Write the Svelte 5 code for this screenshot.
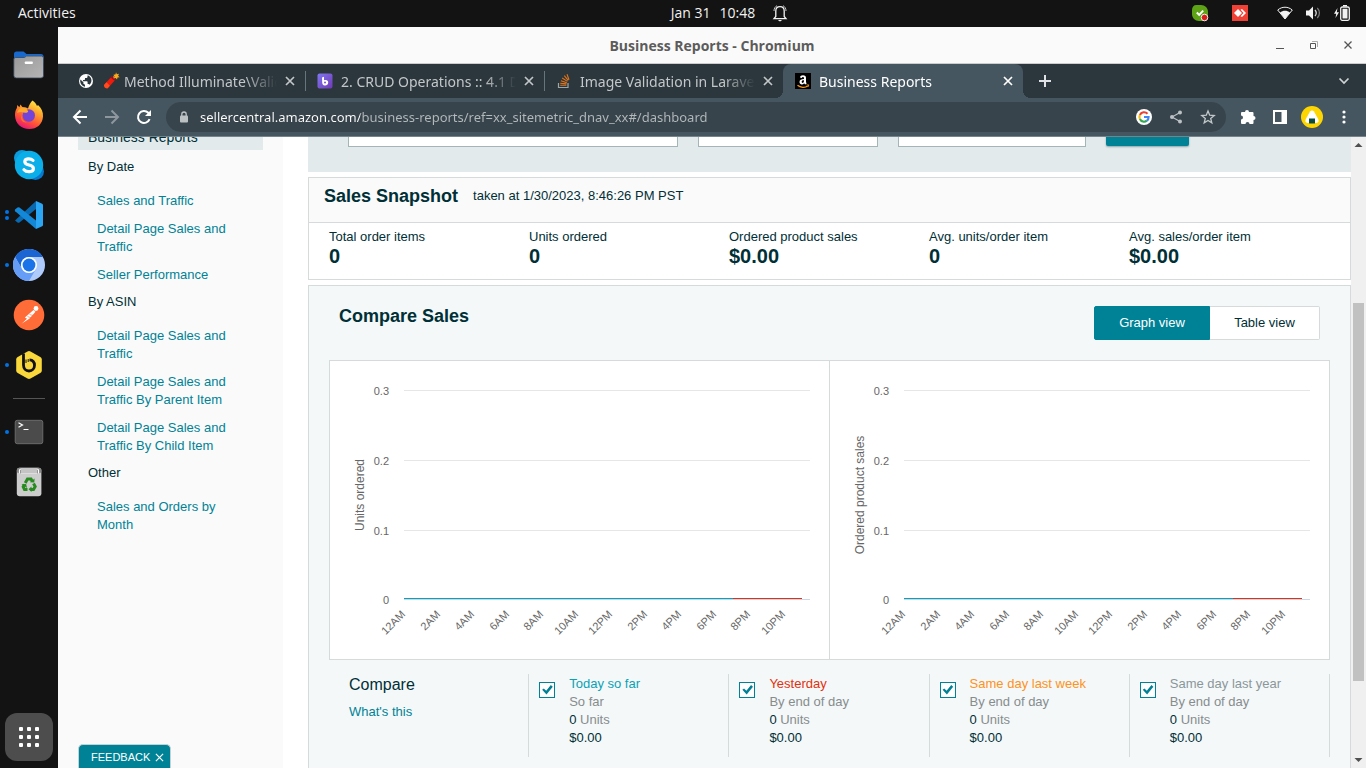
<script>
  const tabs = [
    { title: 'Method Illuminate\\Validation', icon: 'globe', active: false },
    { title: '2. CRUD Operations :: 4.1 Database', icon: 'bagisto', active: false },
    { title: 'Image Validation in Laravel', icon: 'stack', active: false },
    { title: 'Business Reports', icon: 'amazon', active: true }
  ];

  const sections = [
    { title: 'By Date', links: ['Sales and Traffic', 'Detail Page Sales and Traffic', 'Seller Performance'] },
    {
      title: 'By ASIN',
      links: [
        'Detail Page Sales and Traffic',
        'Detail Page Sales and Traffic By Parent Item',
        'Detail Page Sales and Traffic By Child Item'
      ]
    },
    { title: 'Other', links: ['Sales and Orders by Month'] }
  ];

  const metrics = [
    { label: 'Total order items', value: '0' },
    { label: 'Units ordered', value: '0' },
    { label: 'Ordered product sales', value: '$0.00' },
    { label: 'Avg. units/order item', value: '0' },
    { label: 'Avg. sales/order item', value: '$0.00' }
  ];

  const charts = ['Units ordered', 'Ordered product sales'];
  const hours = ['12AM', '2AM', '4AM', '6AM', '8AM', '10AM', '12PM', '2PM', '4PM', '6PM', '8PM', '10PM'];
  const levels = [
    { label: '0.3', y: 30 },
    { label: '0.2', y: 100 },
    { label: '0.1', y: 170 },
    { label: '0', y: 239 }
  ];

  const series = [
    { id: 'today', name: 'Today so far', note: 'So far', color: '#0aa2b5' },
    { id: 'yesterday', name: 'Yesterday', note: 'By end of day', color: '#e3310e' },
    { id: 'week', name: 'Same day last week', note: 'By end of day', color: '#ff9220' },
    { id: 'year', name: 'Same day last year', note: 'By end of day', color: '#8a9799' }
  ];

  let view = $state('graph');
</script>

{#snippet cross(size, weight)}
  <svg width={size} height={size} viewBox="0 0 10 10" aria-hidden="true">
    <path d="M1 1l8 8M9 1l-8 8" stroke="currentColor" stroke-width={weight} fill="none" />
  </svg>
{/snippet}

{#snippet favicon(kind)}
  {#if kind === 'globe'}
    <svg width="16" height="16" viewBox="0 0 16 16" aria-hidden="true">
      <circle cx="8" cy="8" r="7" fill="#fff" />
      <path d="M2.4 6.6l3 2.6v1.6l1.6 1v1.9C4.400 13.300 2.200 11 2.200 8zM9.500 2.600v1.200c0 .8-.6 1.300-1.300 1.300H7v1.200c0 .4-.3.700-.7.700H5v1.300h3.900c.4 0 .7.300.7.700v1.900h.7c.6 0 1.100.4 1.300.9 1.800-2 2.300-4 1.500-6.200-.5-1.400-1.600-2.500-2.900-3z" fill="#2c373d" />
    </svg>
    <svg width="18" height="18" viewBox="0 0 18 18" aria-hidden="true">
      <path d="M2.200 12.800L9.800 4.500l3.600 3.200-7.700 8.500z" fill="#ee1c0c" />
      <path d="M2.200 12.800l2.300-2.500 3.400 3.400-2.200 2.500c-1.500 1.200-4.600-1.500-3.500-3.400z" fill="#ff4b1f" />
      <path d="M9.800 4.500c1.500-.6 4 1.400 3.600 3.200l-1 1L8.700 5.600z" fill="#a80b12" />
      <path d="M11.500 5.500c.2-1.500 1-2.300 2-2.500" stroke="#d5a15a" fill="none" />
      <path d="M14 .3l.9 1.900 2.100-.5-.9 2 1.600 1.500-2.200.3-.5 2.100-1.300-1.700-2.200.5 1.100-1.900-1.200-1.700 2.100-.2z" fill="#fbab1c" />
    </svg>
  {:else if kind === 'bagisto'}
    <svg width="16" height="16" viewBox="0 0 16 16" aria-hidden="true">
      <defs>
        <linearGradient id="violet" x1="0" y1="0" x2="1" y2="1">
          <stop offset="0" stop-color="#8177f2" /><stop offset="1" stop-color="#7039b4" />
        </linearGradient>
      </defs>
      <rect x=".5" y=".5" width="15" height="15" rx="2" fill="url(#violet)" />
      <path d="M5 4.500l2-.8v3.600c2.400-1 4.300.2 4.200 2.300 0 2-1.600 3.200-3.500 3-1.700-.2-2.500-1.400-2.500-3z" fill="#fff" />
      <circle cx="8" cy="9.500" r="1" fill="#7950cf" />
    </svg>
  {:else if kind === 'stack'}
    <svg width="16" height="16" viewBox="0 0 16 16" aria-hidden="true">
      <path d="M2.500 10v4.500h9.500V10" stroke="#a0a6a8" stroke-width="1.200" fill="none" />
      <path d="M4.200 12.300h6.200M4.200 10.200l6.200.7M4.900 7.700l5.900 2M6.200 5l5.200 3.400M8.300 2.700l3.900 4.700M11 1.200l2 5.500" stroke="#e2731a" stroke-width="1.100" fill="none" />
    </svg>
  {:else}
    <svg width="16" height="16" viewBox="0 0 16 16" aria-hidden="true">
      <rect width="16" height="16" />
      <path d="M5 4.600C5.100 2.900 6.400 2.200 8 2.200c2 0 3 .8 3 2.700v3.500c0 1 .4 1.400.8 1.900L10.400 11.500c-.6-.4-1-.9-1.200-1.300-1.500 1.900-4.700 1.600-4.700-1.200 0-2.300 1.900-2.900 4.500-3 0-1.200 0-2-.9-2-.8 0-1 .4-1.200 1z M9 7.200c-1.500 0-2.300.4-2.300 1.600 0 1.400 1.600 1.400 2 .2.300-.5.300-1.200.3-1.800z" fill="#fff" fill-rule="evenodd" />
      <path d="M2.500 12.300c3 2.500 7.500 2.600 10.300.7" stroke="#f79a1c" stroke-width="1.300" fill="none" />
      <path d="M11.500 12l2.300-.1-.7 2" stroke="#f79a1c" stroke-width=".9" fill="none" />
    </svg>
  {/if}
{/snippet}

<div class="desktop">
  <header class="topbar">
    <button class="plain">Activities</button>
    <div class="clock">
      <span>Jan 31</span><span>10:48</span>
      <svg width="16" height="18" viewBox="0 0 16 18" aria-hidden="true">
        <path d="M3.800 12.500V7c0-2.600 1.600-4.300 4.200-4.300s4.200 1.700 4.200 4.300v5.500l1.800 2.200H2z" fill="none" stroke="#f2f2f2" stroke-width="1.300" />
        <path d="M6.200 16h3.600c-.5 1.800-3.100 1.800-3.600 0z" fill="#f2f2f2" />
        <path d="M2 7c0-2.500 1-4.300 3-5.300M14 7c0-2.500-1-4.300-3-5.300" stroke="#c5c5c5" fill="none" />
      </svg>
    </div>
    <div class="tray">
      <svg width="18" height="18" viewBox="0 0 18 18" aria-hidden="true">
        <path d="M1 6c0-3 1.500-5 4.500-5H10c4 0 7 3 7 7v4c0 3-2 5-5 5H8c-4 0-7-3-7-7z" fill="#5da315" />
        <path d="M5.800 8.500l2.400 2.400 4-4.300" stroke="#fff" stroke-width="2" fill="none" />
        <circle cx="13.500" cy="13.500" r="3.300" fill="#dd1b1b" stroke="#eee" stroke-width="1" />
      </svg>
      <svg class="remote" width="16" height="16" viewBox="0 0 16 16" aria-hidden="true">
        <rect width="16" height="16" fill="#ef4136" />
        <path d="M2 8l4-4 4 4-4 4z" fill="#fff" />
        <path d="M8.500 4.800L10 4l4 4-4 4-1.500-.8L11.500 8z" fill="#fff" />
      </svg>
      <svg width="16" height="16" viewBox="0 0 16 16" aria-hidden="true">
        <path d="M.7 5C5 1.300 11 1.300 15.300 5L8 14z" fill="none" stroke="#f2f2f2" />
        <path d="M3 7.500c3-2.300 7-2.300 10 0L8 14z" fill="#f2f2f2" />
      </svg>
      <svg width="16" height="16" viewBox="0 0 16 16" aria-hidden="true">
        <path d="M1 5.500h3L8 1.500v13L4 10.500H1z" fill="#f2f2f2" />
        <path d="M10 5c1.500 1.800 1.500 4.200 0 6" stroke="#d8d8d8" fill="none" stroke-width="1.300" />
        <path d="M12.300 3c2.800 2.800 2.800 7.200 0 10" stroke="#777" fill="none" stroke-width="1.300" />
      </svg>
      <svg width="18" height="18" viewBox="0 0 18 18" aria-hidden="true">
        <path d="M4.500 4L1 9.800h2.200L2.500 14 6 8.200H3.800z" fill="#f2f2f2" />
        <rect x="7.700" y="3" width="8.600" height="13.300" rx="1.500" fill="none" stroke="#f2f2f2" stroke-width="1.300" />
        <path d="M9.500 4.800h5v9.700h-5zM10 1h4v1.500h-4z" fill="#f2f2f2" />
      </svg>
    </div>
  </header>

  <nav class="dock" aria-label="Applications">
    <button aria-label="Files">
      <svg width="32" height="32" viewBox="0 0 32 32" aria-hidden="true">
        <defs><linearGradient id="steel" x1="0" y1="0" x2="1" y2="1"><stop offset="0" stop-color="#999" /><stop offset="1" stop-color="#b5b5b5" /></linearGradient></defs>
        <path d="M1 5q0-2.500 2.500-2.500h7l3 2.500H28q2.500 0 2.500 2.500V14H1z" fill="#1769cf" />
        <path d="M1 10h29.500V8Q30 6.500 28 6.500H13l-2 1.800H3Q1 8.500 1 10z" fill="#3589e6" />
        <path d="M.8 10q0-1.500 2-1.500h8.700l2-1.500h15q2 0 2 2v17.500q0 2.500-2.500 2.500H3.300Q.8 29 .8 26.500z" fill="url(#steel)" stroke="#32455c" stroke-width=".8" />
        <rect x="11.800" y="12.500" width="8" height="2.500" rx=".8" fill="#fff" />
      </svg>
    </button>
    <button aria-label="Firefox">
      <svg width="32" height="32" viewBox="0 0 32 32" aria-hidden="true">
        <defs><linearGradient id="flame" x1=".8" y1="0" x2=".3" y2="1"><stop offset="0" stop-color="#fff14c" /><stop offset=".35" stop-color="#ffa52a" /><stop offset=".7" stop-color="#ff5038" /><stop offset="1" stop-color="#e8137b" /></linearGradient></defs>
        <path d="M19.500 1.500c2.200 1.500 3.800 3.200 4.500 5.600l1-1.200c3.500 3 5.300 7.100 5 11.500C29.500 25 24 30 16.300 30 8 30 2.200 24.300 2 16.500c-.1-3 .6-5.600 2-7.800L4.200 6l2.200 2.300L7.500 5.500l2 2.800c2.200-.3 4 .2 5.500 1.200 1-3.500 2.500-6 4.500-8z" fill="url(#flame)" />
        <circle cx="15.800" cy="16.500" r="6.200" fill="#7444d8" />
        <path d="M4 14c3-1.500 5.500-.8 8-.3 1.500.3 2.700-.2 3.200-1.200-1-2.500-3.300-4-6-4.200-2.500 1-4.400 3-5.200 5.700z" fill="#ffa92c" />
        <path d="M9 16c-.5 3.500 1.500 6.500 5 7.500-4.500.4-7.500-3.500-5-7.500z" fill="#ff752c" />
      </svg>
    </button>
    <button aria-label="Skype">
      <svg width="32" height="32" viewBox="0 0 32 32" aria-hidden="true">
        <circle cx="9" cy="9" r="8" fill="#0d9bdc" /><circle cx="22.500" cy="22.500" r="8.500" fill="#0878cd" />
        <circle cx="16" cy="16" r="14.200" fill="#0aaee8" />
        <path d="M20 11.400c-2.600-2.300-8.200-2-8.200 1.300 0 4.400 8.600 2.200 8.600 6.700 0 4-6.800 4.300-9.400 1.300" fill="none" stroke="#fff" stroke-width="3.200" stroke-linecap="round" />
      </svg>
    </button>
    <button aria-label="Visual Studio Code">
      <i class="dots two"></i>
      <svg width="32" height="32" viewBox="0 0 32 32" aria-hidden="true">
        <path d="M2 21.500l2.500 2q1 .7 2 0L23 10V2z" fill="#0868b0" />
        <path d="M2 10.500l2.500-2q1-.7 2 0L23 21.500V30L2.200 12.200q-.8-.8-.2-1.700z" fill="#1488d8" />
        <path d="M23 2l6.200 2.800q.8.500.8 1.500v19.400q0 1-.8 1.500L23 30z" fill="#2aa6f5" />
      </svg>
    </button>
    <button aria-label="Chromium">
      <i class="dots"></i>
      <svg width="32" height="32" viewBox="0 0 32 32" aria-hidden="true">
        <circle cx="16" cy="16" r="16" fill="#afcbfb" />
        <path d="M2.100 8A16 16 0 0 1 29.900 8H16a8 8 0 0 0-7 12z" fill="#1b66d2" />
        <path d="M2.100 8A16 16 0 0 0 16 32l6.900-12A8 8 0 0 1 9 20z" fill="#669df6" />
        <circle cx="16" cy="16" r="8" fill="#fff" /><circle cx="16" cy="16" r="6.400" fill="#1a73e8" />
      </svg>
    </button>
    <button aria-label="Postman">
      <svg width="32" height="32" viewBox="0 0 32 32" aria-hidden="true">
        <circle cx="16" cy="16" r="15.300" fill="#ff6c37" />
        <circle cx="23" cy="9.500" r="2.400" fill="#fff" />
        <path d="M20.500 11l2 1.800-6.200 7-7.800 5 5.200-5-1.800-1.200z" fill="#fff" />
        <path d="M14.500 17.500l4 1.500M16.500 15.500l3.500 1M8.500 24.800l5-5.300" stroke="#ff6c37" stroke-width=".6" />
      </svg>
    </button>
    <button aria-label="Beekeeper Studio">
      <i class="dots"></i>
      <svg width="32" height="32" viewBox="0 0 32 32" aria-hidden="true">
        <path d="M14.500 2.400q1.500-.8 3 0l9.800 5.500q1.500.9 1.500 2.600v11q0 1.700-1.500 2.600l-9.800 5.500q-1.500.8-3 0l-9.800-5.500q-1.500-.9-1.500-2.600v-11q0-1.700 1.500-2.600z" fill="#fad83b" />
        <path d="M10.500 4.500V16c0 3.600 2.300 6 5.500 6s5.500-2.500 5.500-5.700-2-5.300-5-5.500" fill="none" stroke="#111" stroke-width="2.800" />
        <path d="M13 14v-3.500M15.200 13v-3" stroke="#111" stroke-width="1" />
      </svg>
    </button>
    <hr />
    <button aria-label="Terminal">
      <i class="dots"></i>
      <svg width="32" height="32" viewBox="0 0 32 32" aria-hidden="true">
        <rect x="2.200" y="4.300" width="27.600" height="23.400" rx="2" fill="#4b4b4b" stroke="#777" stroke-width=".8" />
        <path d="M5.500 6.800l4 2.200-4 2.200M10.500 13.500h5" stroke="#fff" stroke-width="1.200" fill="none" />
      </svg>
    </button>
    <button aria-label="Trash">
      <svg width="32" height="32" viewBox="0 0 32 32" aria-hidden="true">
        <rect x="3.800" y="1.800" width="24.600" height="28.500" rx="3" fill="#cdcdcd" />
        <rect x="3.800" y="1.800" width="24.600" height="5.500" rx="2.500" fill="#888" />
        <path d="M6.500 7.500V4.500Q6.500 3 8 3h16q1.500 0 1.500 1.500v3M8 5h16M8 7h16" stroke="#fff" stroke-width="1.200" fill="none" />
        <g fill="none" stroke="#278b1f" stroke-width="3">
          <path d="M12.200 17l2.300-4h3.500l1.300 2.500" /><path d="M20.500 17.500l1.700 3-1.700 3h-3" /><path d="M14.500 23.500h-3l-1.300-2.700 1.200-2.300" />
        </g>
        <path d="M17 16.200l4.300.3.300-4zM18.500 20.500v5.500l-3-2.700zM8.500 18.300l4.600-.4 1 4z" fill="#278b1f" />
      </svg>
    </button>
    <button class="grid-button" aria-label="Show applications">
      <svg width="20" height="20" viewBox="0 0 20 20" aria-hidden="true">
        {#each [0, 8, 16] as y}{#each [0, 8, 16] as x}<rect {x} {y} width="4" height="4" rx="1" fill="#fff" />{/each}{/each}
      </svg>
    </button>
  </nav>

  <main class="window">
    <div class="titlebar">
      <span class="window-title">Business Reports - Chromium</span>
      <div class="window-buttons">
        <button aria-label="Minimize"><svg width="10" height="12" viewBox="0 0 10 12"><path d="M1 9.500h8" stroke="#555" /></svg></button>
        <button aria-label="Restore"><svg width="10" height="10" viewBox="0 0 10 10"><path d="M1.500 3.500h5v5h-5z" stroke="#555" fill="none" /><path d="M3 1.500h5.500V7" stroke="#aaa" fill="none" /></svg></button>
        <button aria-label="Close window"><svg width="10" height="10" viewBox="0 0 10 10"><path d="M1.500 1.500l7 7M8.500 1.500l-7 7" stroke="#555" stroke-width="1.300" /></svg></button>
      </div>
    </div>

    <div class="tabstrip">
      {#each tabs as tab}
        <div class="tab" class:active={tab.active}>
          <button class="tab-label">
            {@render favicon(tab.icon)}
            <span>{tab.title}</span>
          </button>
          <button class="tab-close" aria-label="Close tab">{@render cross(10, 1.7)}</button>
        </div>
      {/each}
      <button class="new-tab" aria-label="New tab"><svg width="14" height="14" viewBox="0 0 14 14"><path d="M7 1v12M1 7h12" stroke="#dfe2e4" stroke-width="2" /></svg></button>
      <button class="tab-search" aria-label="Search tabs"><svg width="12" height="8" viewBox="0 0 12 8"><path d="M1.500 1.500L6 6l4.500-4.500" stroke="#cfd3d5" stroke-width="1.700" fill="none" /></svg></button>
    </div>

    <div class="toolbar">
      <button aria-label="Back"><svg width="16" height="16" viewBox="0 0 16 16"><path d="M15 8H2.500M8.500 1.500L2 8l6.500 6.500" stroke="#fff" stroke-width="2" fill="none" /></svg></button>
      <button aria-label="Forward"><svg width="16" height="16" viewBox="0 0 16 16"><path d="M1 8h12.500M7.500 1.500L14 8l-6.500 6.500" stroke="#8d979d" stroke-width="2" fill="none" /></svg></button>
      <button aria-label="Reload"><svg width="16" height="16" viewBox="0 0 16 16"><path d="M13.600 10.200A6 6 0 1 1 12.300 3.800L14 5.500" stroke="#fff" stroke-width="2" fill="none" /><path d="M15 1v6H9z" fill="#fff" /></svg></button>
      <div class="omnibox">
        <svg width="10" height="12" viewBox="0 0 10 12" aria-hidden="true"><rect x="1" y="4.500" width="8" height="7" rx="1" fill="#bcc1c4" /><path d="M2.800 5V3.200a2.200 2.200 0 0 1 4.400 0V5" stroke="#bcc1c4" stroke-width="1.300" fill="none" /></svg>
        <input type="text" aria-label="Address" spellcheck="false" value="sellercentral.amazon.com/business-reports/ref=xx_sitemetric_dnav_xx#/dashboard" />
        <button aria-label="Search with Google">
          <svg width="16" height="16" viewBox="0 0 16 16"><circle cx="8" cy="8" r="8" fill="#fff" />
            <g fill="none" stroke-width="2.100"><path d="M11.500 4.700A4.600 4.600 0 0 0 3.900 6" stroke="#ea4335" /><path d="M3.900 6a4.600 4.600 0 0 0 0 4" stroke="#fbbc05" /><path d="M3.900 10a4.600 4.600 0 0 0 7 1.700" stroke="#34a853" /><path d="M10.900 11.700A4.600 4.600 0 0 0 12.600 8H8" stroke="#4285f4" /></g></svg>
        </button>
        <button aria-label="Share"><svg width="16" height="16" viewBox="-1 -1 16 16"><path d="M11 2.500L3 7l8 4.500" stroke="#bcc1c4" stroke-width="1.200" fill="none" /><g fill="#bcc1c4"><circle cx="11" cy="2.500" r="2" /><circle cx="3" cy="7" r="2" /><circle cx="11" cy="11.500" r="2" /></g></svg></button>
        <button aria-label="Bookmark"><svg width="16" height="16" viewBox="0 0 16 16"><path d="M8 2l1.700 4.200 4.500.3-3.500 2.900 1.100 4.400L8 11.400l-3.800 2.400 1.100-4.400L1.800 6.500l4.500-.3z" stroke="#c3c8ca" stroke-width="1.300" fill="none" /></svg></button>
      </div>
      <button class="ext" aria-label="Extensions"><svg width="16" height="16" viewBox="0 0 16 16"><path d="M5 3a2 2 0 0 1 4 0h3.500q1 0 1 1v3a2 2 0 0 1 0 4v3q0 1-1 1H9.500a2 2 0 0 0-4 0H2q-1 0-1-1v-3.500a2 2 0 0 0 0-4V4q0-1 1-1z" fill="#fff" /></svg></button>
      <button class="ext" aria-label="Side panel"><svg width="14" height="14" viewBox="0 0 14 14"><path d="M0 0h14v14H0z" fill="#fff" /><path d="M2 2h6.500v10H2z" fill="#455660" /></svg></button>
      <button class="ext" aria-label="Profile"><svg width="22" height="22" viewBox="0 0 22 22"><circle cx="11" cy="11" r="11" fill="#fdd500" /><path d="M9 5.500q2-2.200 4 0l4.200 7.500q1.500 3.500-1.700 4H6.500q-3.200-.5-1.700-4z" fill="#fff" /><path d="M8 12.500h6V17q0 .5-.5.500h-5Q8 17.500 8 17z" fill="#074b43" /></svg></button>
      <button class="ext" aria-label="Menu"><svg width="4" height="14" viewBox="0 0 4 14"><g fill="#fff"><circle cx="2" cy="2" r="1.600" /><circle cx="2" cy="7" r="1.600" /><circle cx="2" cy="12" r="1.600" /></g></svg></button>
    </div>

    <div class="viewport">
      <aside class="sidebar">
        <div class="current">Business Reports</div>
        {#each sections as section}
          <h3>{section.title}</h3>
          <ul>
            {#each section.links as link}<li><a href="#report">{link}</a></li>{/each}
          </ul>
        {/each}
      </aside>

      <div class="content">
        <form class="filters">
          <input class="wide" type="text" aria-label="Date range" />
          <input class="mid" type="text" aria-label="From" />
          <input class="mid last" type="text" aria-label="To" />
          <button type="button" aria-label="Apply"></button>
        </form>

        <section class="snapshot">
          <header>
            <h2>Sales Snapshot</h2>
            <span>taken at 1/30/2023, 8:46:26 PM PST</span>
          </header>
          <dl>
            {#each metrics as m}<div><dt>{m.label}</dt><dd>{m.value}</dd></div>{/each}
          </dl>
        </section>

        <section class="compare">
          <header>
            <h2>Compare Sales</h2>
            <div class="toggle">
              <button class:selected={view === 'graph'} onclick={() => (view = 'graph')}>Graph view</button>
              <button class:selected={view === 'table'} onclick={() => (view = 'table')}>Table view</button>
            </div>
          </header>

          <div class="charts">
            {#each charts as title}
              <svg viewBox="0 0 499 298" role="img" aria-label={title}>
                {#each levels as level}
                  <path d="M74 {level.y - 0.5}H480" stroke={level.label === '0' ? '#ccd6eb' : '#e6e6e6'} />
                  <text class="tick" x="59" y={level.y + 4} text-anchor="end">{level.label}</text>
                {/each}
                <path d="M74 237.500H403" stroke="#0aa2b5" />
                <path d="M403 237.500H472" stroke="#e3310e" />
                {#each hours as hour, i}
                  <text class="tick" text-anchor="end" transform="translate({Math.round(76 + i * 34.5)} 254) rotate(-45)">{hour}</text>
                {/each}
                <text class="axis" text-anchor="middle" transform="translate(34 134) rotate(-90)">{title}</text>
              </svg>
            {/each}
          </div>

          <div class="legend">
            <div class="intro">
              <h4>Compare</h4>
              <a href="#help">What's this</a>
            </div>
            {#each series as s}
              <div class="entry">
                <input type="checkbox" id={s.id} checked />
                <div>
                  <label for={s.id} style:color={s.color}>{s.name}</label>
                  <p class="muted">{s.note}</p>
                  <p>0 <span class="muted">Units</span></p>
                  <p>$0.00</p>
                </div>
              </div>
            {/each}
          </div>
        </section>
      </div>

      <div class="scrollbar" aria-hidden="true">
        <svg width="15" height="16" viewBox="0 0 15 16"><path d="M3.500 10h8l-4-4z" fill="#505050" /></svg>
        <div class="track"><div class="before"></div><div class="thumb"></div><div class="after"></div></div>
        <svg width="15" height="16" viewBox="0 0 15 16"><path d="M3.500 6h8l-4 4z" fill="#505050" /></svg>
      </div>

      <button class="feedback">FEEDBACK {@render cross(9, 1.3)}</button>
    </div>
  </main>
</div>

<style>
  :global(body) { margin: 0; }
  .desktop, .desktop * { box-sizing: border-box; }
  .desktop {
    display: grid;
    grid-template: 27px minmax(0, 1fr) / 58px minmax(0, 1fr);
    height: 100vh;
    overflow: hidden;
    background: #131313;
    font-family: "Open Sans", "Noto Sans", sans-serif;
  }
  button { border: 0; padding: 0; background: none; font: inherit; color: inherit; display: flex; align-items: center; justify-content: center; }
  svg { display: block; flex: none; }
  h2, h3, h4, p, ul, dl, dd { margin: 0; padding: 0; }
  a { color: #008296; text-decoration: none; }

  .topbar { grid-column: 1 / -1; display: grid; grid-template-columns: 1fr auto 1fr; align-items: center; color: #f2f2f2; font-size: 14px; line-height: 20px; }
  .topbar .plain { justify-self: start; padding: 0 0 1px 18px; }
  .clock { display: flex; align-items: center; gap: 9px; padding: 0 0 1px 93px; }
  .clock svg { margin-left: 8px; }
  .tray { display: flex; align-items: center; justify-content: flex-end; gap: 12px; padding: 0 15px 1px 0; }
  .remote { margin: 0 17px 0 11px; }

  .dock { display: flex; flex-direction: column; align-items: center; padding: 13px 0 7px; }
  .dock button { position: relative; width: 58px; height: 50px; flex: none; }
  .dock hr { width: 32px; height: 1px; margin: 8px 0; border: 0; background: #555; flex: none; }
  .dots { position: absolute; left: 5px; width: 4px; height: 4px; border-radius: 2px; background: #0073e5; }
  .two { top: 20px; box-shadow: 0 6px #0073e5; }
  .dock .grid-button { width: 48px; height: 48px; margin-top: auto; border-radius: 12px; background: #4d4d4d; }

  .window { display: flex; flex-direction: column; min-width: 0; min-height: 0; background: #fff; }
  .titlebar { display: flex; flex: none; align-items: center; justify-content: center; position: relative; height: 37px; background: #fafafa; border-bottom: 1px solid #ccc; }
  .window-title { font-size: 14px; font-weight: 700; color: #5c5c5c; }
  .window-buttons { position: absolute; right: 13px; display: flex; gap: 24px; }

  .tabstrip { display: flex; flex: none; height: 34px; padding: 0 16px 0 8px; background: #2c373d; color: #c3c7c9; font-family: "Noto Sans", "Open Sans", sans-serif; font-size: 14px; }
  .tab { position: relative; flex: 0 1 239px; min-width: 0; display: flex; align-items: center; padding: 0 10px 0 12px; }
  .tab:not(.active):not(:nth-child(3))::after { content: ""; position: absolute; right: -1px; top: 7px; width: 1px; height: 20px; background: #68757c; }
  .tab-label { flex: 1; min-width: 0; justify-content: flex-start; gap: 8px; }
  .tab-label svg + svg { margin-right: -4px; }
  .tab-label span { flex: 1; min-width: 0; overflow: hidden; white-space: nowrap; text-align: left; mask-image: linear-gradient(to right, #000 calc(100% - 32px), transparent); }
  .tab-close { flex: none; margin-left: 8px; }
  .tab.active { flex-basis: 240px; background: #455660; border-radius: 8px 8px 0 0; color: #fff; }
  .tab.active::before, .tab.active::after { content: ""; position: absolute; bottom: 0; width: 8px; height: 8px; }
  .tab.active::before { right: 100%; background: radial-gradient(circle at 0 0, transparent 8px, #455660 8px); }
  .tab.active::after { left: 100%; background: radial-gradient(circle at 100% 0, transparent 8px, #455660 8px); }
  .new-tab { margin-left: 15px; }
  .tab-search { margin-left: auto; }

  .toolbar { display: flex; flex: none; align-items: center; gap: 16px; height: 39px; padding: 0 14px; background: #455660; border-bottom: 1px solid #75838b; }
  .omnibox { flex: 1; min-width: 0; display: flex; align-items: center; height: 30px; margin: 0 -2px; padding: 0 10px 0 13px; border-radius: 15px; background: #38444b; gap: 16px; }
  .omnibox input {
    flex: 1; min-width: 0; height: 24px; border: 0; padding: 0; margin-left: -5px; outline: 0;
    font: 13px/24px "Noto Sans", "Open Sans", sans-serif;
    color: transparent;
    background: linear-gradient(to right, #fff 160px, #b3babd 160px);
    background-clip: text; -webkit-background-clip: text;
  }
  .ext { width: 16px; }

  .viewport { position: relative; flex: 1; min-height: 0; display: flex; overflow: hidden; font-family: "Liberation Sans", Arial, sans-serif; font-size: 13px; line-height: 18px; color: #002f36; }
  .sidebar { flex: none; width: 225px; padding: 0 20px; background: #fafafa; }
  .current { margin-top: -12px; height: 25px; padding: 3px 10px; background: #e2eaec; font-size: 14px; }
  .sidebar h3 { margin: 9px 0 16px; padding-left: 10px; font-size: 13px; font-weight: 400; }
  .current + h3 { margin-top: 8px; }
  .sidebar ul { list-style: none; padding: 0 20px 0 19px; display: grid; gap: 10px; }
  .sidebar a { display: block; }

  .content { flex: 1; min-width: 0; padding-left: 25px; display: flex; flex-direction: column; gap: 5px; }
  .filters { flex: none; display: flex; gap: 20px; height: 55px; margin-top: -20px; padding-left: 40px; background: #e2eaec; }
  .filters input { height: 30px; border: 1px solid #a3b5b8; background: #fff; padding: 0 10px; }
  .wide { width: 330px; }
  .mid { width: 180px; }
  .last { width: 188px; }
  .filters button { width: 83px; height: 29px; border-radius: 2px; background: #008296; box-shadow: 0 1px 2px #8aa5aa; }

  h2 { font-size: 18px; line-height: 24px; font-weight: 700; }
  .snapshot { flex: none; border: 1px solid #d5dbdb; }
  .snapshot header { display: flex; gap: 15px; height: 45px; padding: 6px 15px; border-bottom: 1px solid #d5dbdb; background: #fafafa; line-height: 24px; }
  .snapshot dl { display: flex; padding: 5px 20px 13px; }
  .snapshot dl div { flex: 0 1 200px; }
  .snapshot dd { font-size: 20px; line-height: 20px; font-weight: 700; }

  .compare { flex: 1 0 auto; padding: 20px; border: 1px solid #d5dbdb; background: #f4f8f9; }
  .compare header { display: flex; justify-content: space-between; padding: 0 10px 20px; }
  .compare h2 { margin-top: -2px; }
  .toggle { display: grid; grid-template-columns: 116px 110px; height: 34px; }
  .toggle button { border: 1px solid #d5dbdb; border-left: 0; border-radius: 0 2px 2px 0; background: #fff; }
  .toggle .selected { border: 1px solid #008296; border-radius: 2px 0 0 2px; background: #008296; color: #fff; }
  .charts { display: flex; border: 1px solid #d5dbdb; background: #fff; }
  .charts svg { flex: 1; min-width: 0; }
  .charts svg + svg { border-left: 1px solid #d5dbdb; }
  .tick { font-size: 11px; fill: #666; }
  .axis { font-size: 12px; fill: #666; }

  .legend { display: grid; grid-template-columns: repeat(5, minmax(0, 1fr)); padding-top: 14px; }
  .intro, .entry { height: 83px; padding-top: 1px; border-right: 1px solid #d5dbdb; }
  .intro { padding-left: 20px; }
  .intro h4 { font-size: 16px; line-height: 20px; font-weight: 400; margin-bottom: 8px; }
  .entry { display: flex; gap: 14px; padding-left: 10px; }
  .entry label { display: block; }
  .entry input { appearance: none; display: grid; flex: none; width: 16px; height: 16px; margin: 7px 0 0; border: 1px solid #008296; background: #fff; }
  .entry input:checked::after { content: ""; clip-path: polygon(14% 49%, 26% 39%, 43% 55%, 76% 14%, 90% 26%, 45% 82%); background: #008296; }
  .muted { color: #878c8e; }

  .scrollbar { flex: none; width: 15px; display: flex; flex-direction: column; background: #f0f0f0; }
  .track { flex: 1; display: flex; flex-direction: column; padding: 0 2px; }
  .before { flex: 150; }
  .thumb { flex: 378; background: #c1c1c1; }
  .after { flex: 71; }

  .feedback { position: absolute; left: 20px; bottom: 0; height: 24px; gap: 5px; padding: 1px 6px 0 12px; border: 1px solid #c5d2d4; border-bottom: 0; border-radius: 5px 5px 0 0; background: #008296; color: #fff; font-size: 11px; }
</style>
